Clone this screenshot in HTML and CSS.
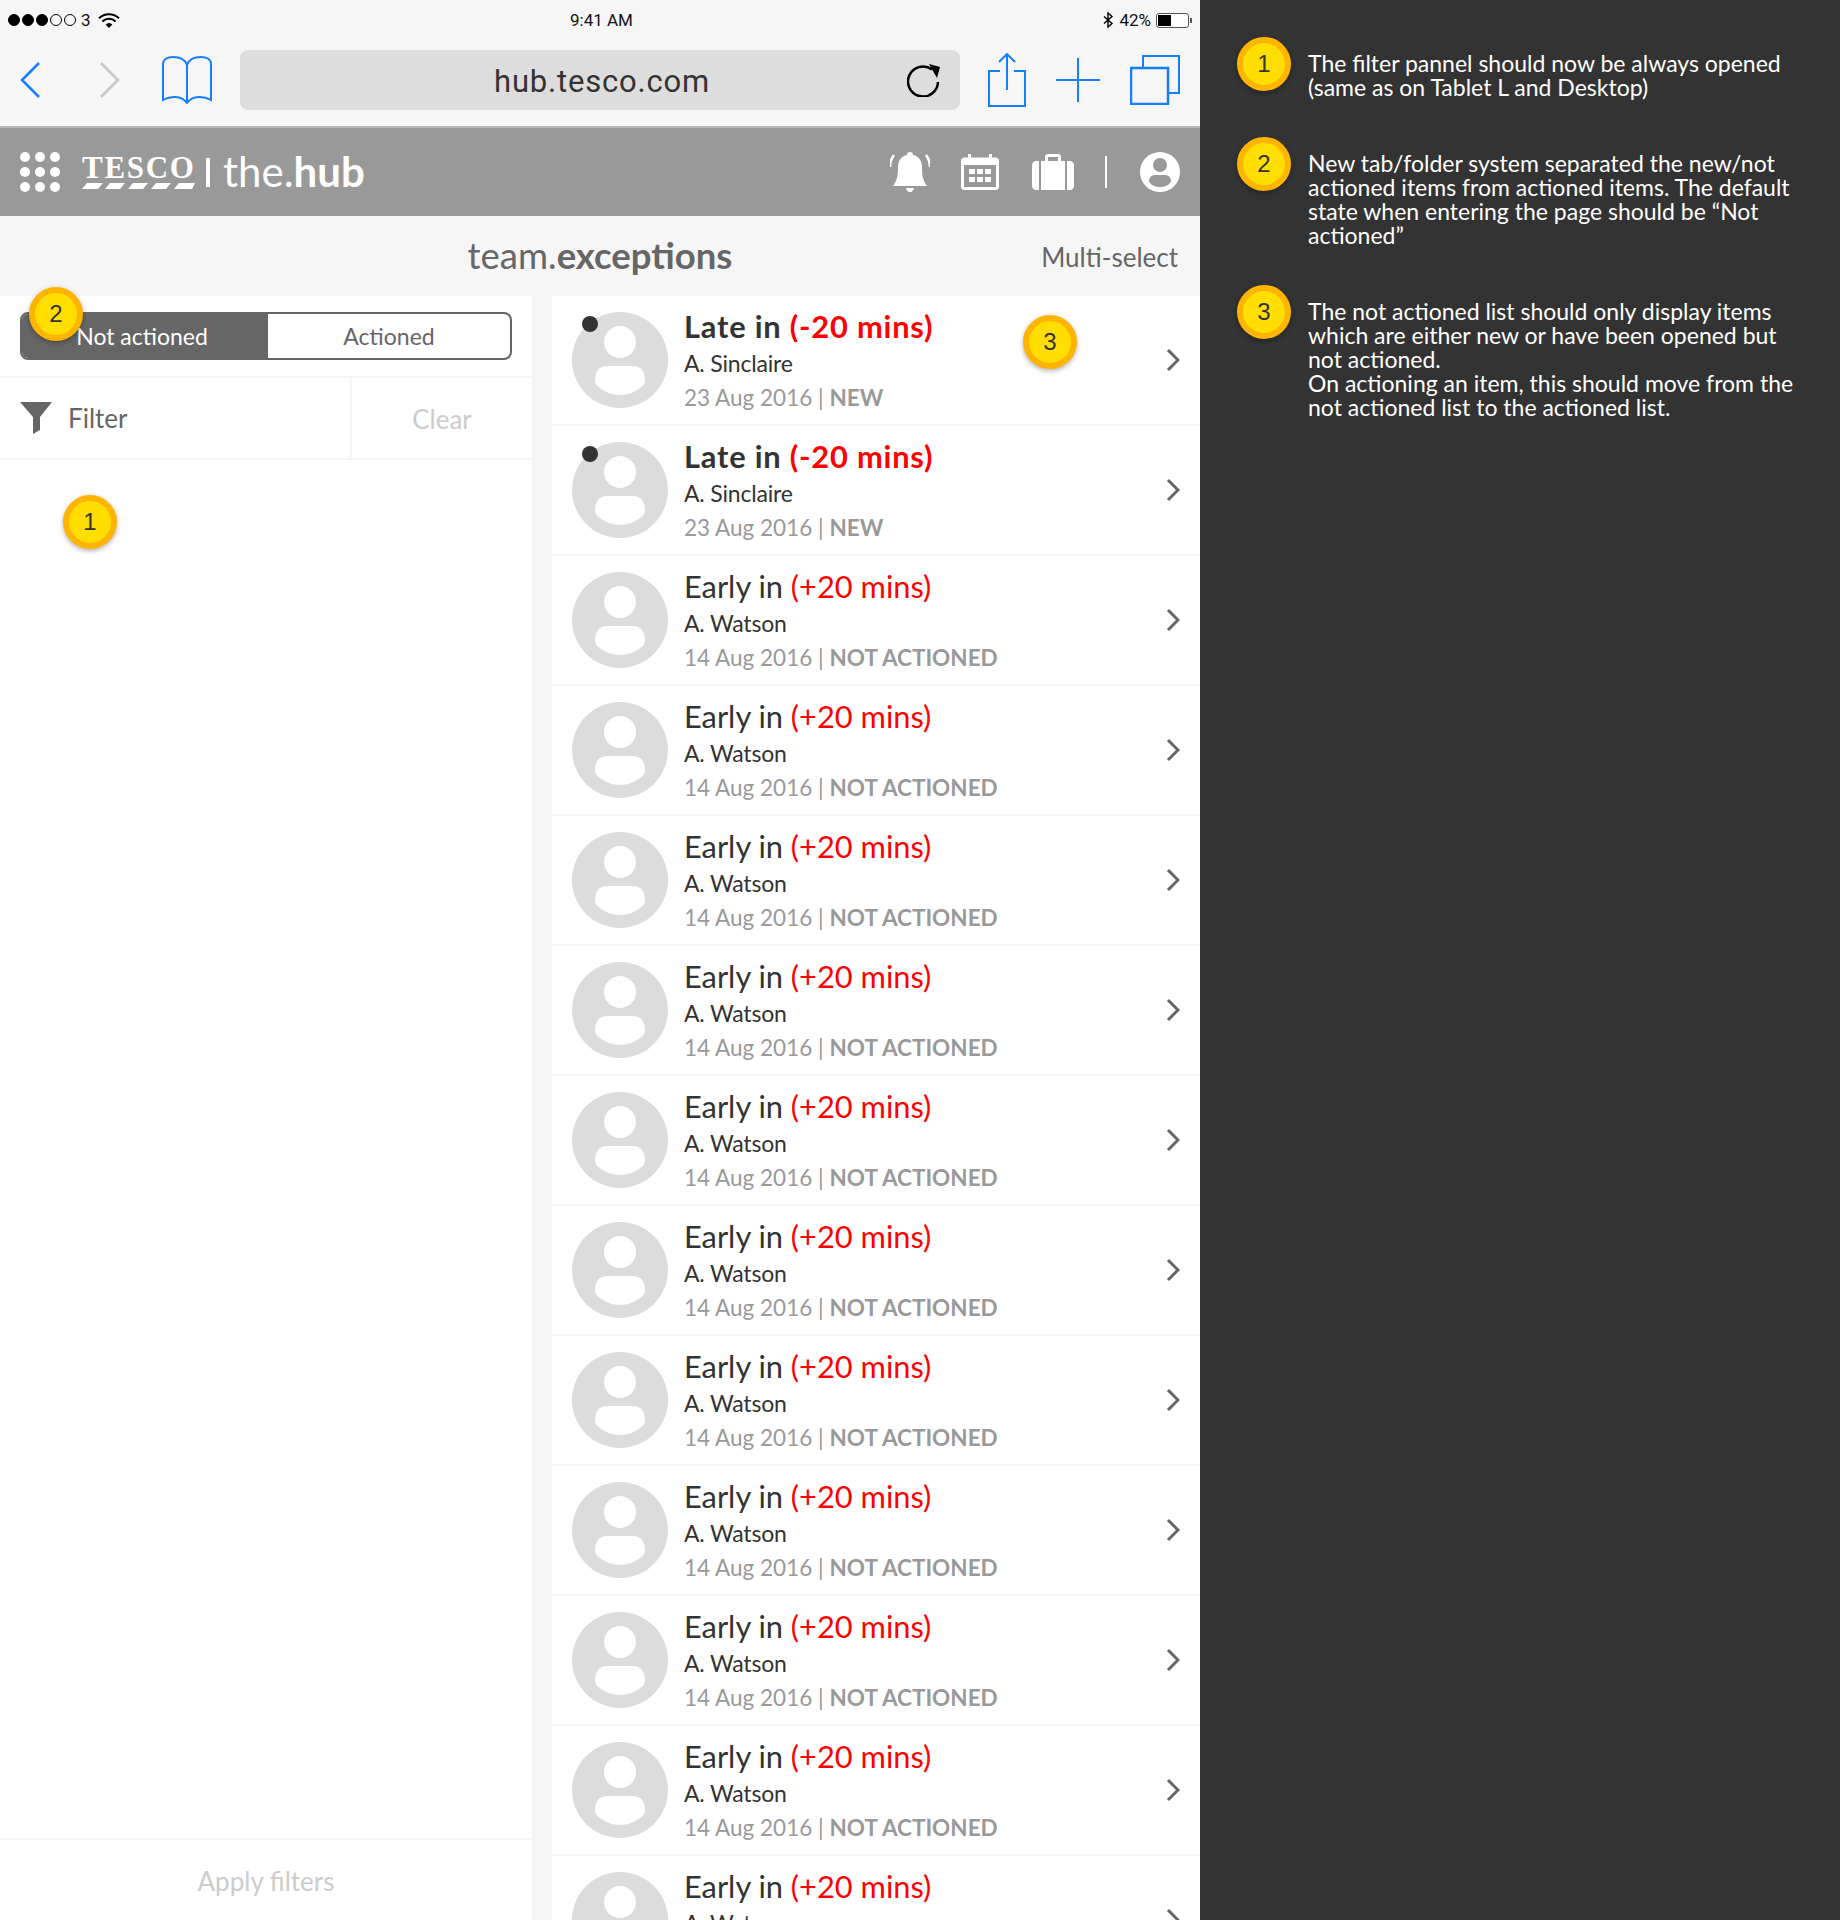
FILE: index.html
```html
<!DOCTYPE html>
<html lang="en">
<head>
    <meta charset="UTF-8">
    <title>team.exceptions - annotated</title>
    <link rel="stylesheet" href="styles.css">
</head>
<body>
<svg class="defs" width="0" height="0">
    <symbol id="avatar" viewBox="0 0 96 96">
        <circle cx="48" cy="48" r="48" fill="#dcdcdc"/>
        <circle cx="48" cy="30" r="16" fill="#fff"/>
        <path d="M35 54h26c8 0 12 6 12 14 0 4-2 6-5 8-5 4-12 7-20 7s-15-3-20-7c-3-2-5-4-5-8 0-8 4-14 12-14z" fill="#fff"/>
    </symbol>
    <symbol id="chevron" viewBox="0 0 14 24">
        <path d="M2 2l10 10L2 22" fill="none" stroke="#666" stroke-width="3"/>
    </symbol>
</svg>
<div class="page">
    <div class="tablet">
        <div class="status-bar">
            <div class="status-left">
                <span class="signal"><i class="on"></i><i class="on"></i><i class="on"></i><i></i><i></i></span>
                <span>3</span>
                <svg class="wifi" width="22" height="15" viewBox="0 0 22 15">
                    <path d="M1 5.2a14.5 14.5 0 0 1 20 0" fill="none" stroke="#000" stroke-width="2"/>
                    <path d="M4.4 8.5a9.6 9.6 0 0 1 13.2 0" fill="none" stroke="#000" stroke-width="2"/>
                    <path d="M7.6 11.6a5 5 0 0 1 6.8 0L11 15z" fill="#000"/>
                </svg>
            </div>
            <div class="status-time">9:41 AM</div>
            <div class="status-right">
                <svg width="11" height="16" viewBox="0 0 11 16"><path d="M1 4.5l8 7-4 3.5V1l4 3.5-8 7" fill="none" stroke="#000" stroke-width="1.4"/></svg>
                <span>42%</span>
                <span class="battery"><span class="battery-level"></span></span>
            </div>
        </div>

        <div class="toolbar">
            <svg class="tool-back" width="20" height="36" viewBox="0 0 20 36"><path d="M19 1L2 18l17 17" fill="none" stroke="#147efb" stroke-width="2.5"/></svg>
            <svg class="tool-forward" width="20" height="36" viewBox="0 0 20 36"><path d="M1 1l17 17L1 35" fill="none" stroke="#c8c8c8" stroke-width="2.5"/></svg>
            <svg class="tool-book" width="50" height="48" viewBox="0 0 50 48"><path d="M25 9C23 3 17 1 11 1 6 1 1 3 1 8v36c7-4 18-5 24 3 6-8 17-7 24-3V8c0-5-5-7-10-7-6 0-12 2-14 8zm0 0v38" fill="none" stroke="#147efb" stroke-width="2"/></svg>
            <div class="url-bar">
                <span class="url-text">hub.tesco.com</span>
                <svg class="reload" width="34" height="34" viewBox="0 0 34 34"><path d="M25 6.500A15 15 0 1 0 31 19" fill="none" stroke="#000" stroke-width="2.500"/><path d="M22 1l11 3-3 11z" fill="#000"/></svg>
            </div>
            <svg class="tool-share" width="38" height="54" viewBox="0 0 38 54"><path d="M12 18H1v35h36V18H26M19 37V2M11 9l8-8 8 8" fill="none" stroke="#147efb" stroke-width="2"/></svg>
            <svg class="tool-plus" width="44" height="44" viewBox="0 0 44 44"><path d="M22 0v44M0 22h44" fill="none" stroke="#147efb" stroke-width="2"/></svg>
            <svg class="tool-tabs" width="50" height="50" viewBox="0 0 50 50"><path d="M13 12V1h36v37H38" fill="none" stroke="#147efb" stroke-width="2"/><rect x="1" y="13" width="37" height="36" fill="none" stroke="#147efb" stroke-width="2.500"/></svg>
        </div>

        <div class="app-header">
            <svg class="menu-dots" width="40" height="40" viewBox="0 0 40 40" fill="#fff">
                <circle cx="5" cy="5" r="5"/><circle cx="20" cy="5" r="5"/><circle cx="35" cy="5" r="5"/>
                <circle cx="5" cy="20" r="5"/><circle cx="20" cy="20" r="5"/><circle cx="35" cy="20" r="5"/>
                <circle cx="5" cy="35" r="5"/><circle cx="20" cy="35" r="5"/><circle cx="35" cy="35" r="5"/>
            </svg>
            <div class="logo">
                <span class="logo-word">TESCO</span>
                <svg width="113" height="6" viewBox="0 0 113 6" fill="#fff"><path d="M5 0h16l-5 6H0zM28 0h15l-5 6H23zM51 0h15l-5 6H46zM74 0h15l-5 6H69zM97 0h16l-3 6H92z"/></svg>
            </div>
            <span class="logo-bar"></span>
            <span class="hub-name">the.<b>hub</b></span>
            <div class="header-icons">
                <svg width="40" height="40" viewBox="0 0 40 40" fill="#fff">
                    <path d="M20 0c2 0 3 1 3 3 6 1 9 6 9 12 0 8 1 14 5 19H3c4-5 5-11 5-19 0-6 3-11 9-12 0-2 1-3 3-3z"/>
                    <path d="M16 36h8c0 2-2 4-4 4s-4-2-4-4z"/>
                    <path d="M4 3C1 7 0 11 0 15M36 3c3 4 4 8 4 12" fill="none" stroke="#fff" stroke-width="2.500"/>
                </svg>
                <svg class="icon-cal" width="38" height="36" viewBox="0 0 38 36">
                    <rect x="1.500" y="5" width="35" height="29.500" rx="2" fill="none" stroke="#fff" stroke-width="3"/>
                    <path d="M1 5h36v6H1zM7 0h3v8H7zM28 0h3v8h-3z" fill="#fff"/>
                    <path d="M8 15h6v5H8zM16 15h6v5h-6zM24 15h6v5h-6zM8 23h6v5H8zM16 23h6v5h-6zM24 23h6v5h-6z" fill="#fff"/>
                </svg>
                <svg class="icon-case" width="42" height="36" viewBox="0 0 42 36" fill="#fff">
                    <path d="M13 7V3c0-2 1-3 3-3h10c2 0 3 1 3 3v4h-3V3H16v4z"/>
                    <path d="M9 7h24v29H9zM0 11c0-2 2-4 4-4h3v29H4c-2 0-4-2-4-4zM35 7h3c2 0 4 2 4 4v21c0 2-2 4-4 4h-3z"/>
                </svg>
                <span class="header-rule"></span>
                <svg class="icon-user" width="40" height="40" viewBox="0 0 40 40">
                    <circle cx="20" cy="20" r="20" fill="#fff"/>
                    <circle cx="20" cy="13" r="7" fill="#999"/>
                    <path d="M15 23h10c4 0 6 3 6 6 0 1-1 2-2 3-2 2-5 3-9 3s-7-1-9-3c-1-1-2-2-2-3 0-3 2-6 6-6z" fill="#999"/>
                </svg>
            </div>
        </div>

        <div class="title-bar">
            <h1 class="page-title">team.<b>exceptions</b></h1>
            <span class="multi-select">Multi-select</span>
        </div>

        <div class="content">
            <div class="filter-panel">
                <div class="tabs-row">
                    <div class="tabs">
                        <span class="tab tab-active">Not actioned</span>
                        <span class="tab">Actioned</span>
                    </div>
                    <span class="badge badge-tabs">2</span>
                </div>
                <div class="filter-row">
                    <div class="filter-label">
                        <svg width="32" height="32" viewBox="0 0 32 32"><path d="M0 0h32L20 15v13l-7 4V15z" fill="#666"/></svg>
                        <span>Filter</span>
                    </div>
                    <div class="filter-clear">Clear</div>
                </div>
                <div class="filter-body">
                    <span class="badge badge-filter">1</span>
                </div>
                <div class="apply-row">Apply filters</div>
            </div>

            <div class="exception-list">
                <div class="row row-new">
                    <span class="avatar"><svg width="96" height="96"><use href="#avatar"/></svg><span class="unread"></span></span>
                    <div class="row-text">
                        <div class="row-title"><b>Late in <span class="mins">(-20 mins)</span></b></div>
                        <div class="row-name">A. Sinclaire</div>
                        <div class="row-meta">23 Aug 2016 | <b>NEW</b></div>
                    </div>
                    <svg class="row-arrow" width="14" height="24"><use href="#chevron"/></svg>
                    <span class="badge badge-list">3</span>
                </div>
                <div class="row row-new">
                    <span class="avatar"><svg width="96" height="96"><use href="#avatar"/></svg><span class="unread"></span></span>
                    <div class="row-text">
                        <div class="row-title"><b>Late in <span class="mins">(-20 mins)</span></b></div>
                        <div class="row-name">A. Sinclaire</div>
                        <div class="row-meta">23 Aug 2016 | <b>NEW</b></div>
                    </div>
                    <svg class="row-arrow" width="14" height="24"><use href="#chevron"/></svg>
                </div>
                <div class="row">
                    <span class="avatar"><svg width="96" height="96"><use href="#avatar"/></svg></span>
                    <div class="row-text">
                        <div class="row-title">Early in <span class="mins">(+20 mins)</span></div>
                        <div class="row-name">A. Watson</div>
                        <div class="row-meta">14 Aug 2016 | <b>NOT ACTIONED</b></div>
                    </div>
                    <svg class="row-arrow" width="14" height="24"><use href="#chevron"/></svg>
                </div>
                <div class="row">
                    <span class="avatar"><svg width="96" height="96"><use href="#avatar"/></svg></span>
                    <div class="row-text">
                        <div class="row-title">Early in <span class="mins">(+20 mins)</span></div>
                        <div class="row-name">A. Watson</div>
                        <div class="row-meta">14 Aug 2016 | <b>NOT ACTIONED</b></div>
                    </div>
                    <svg class="row-arrow" width="14" height="24"><use href="#chevron"/></svg>
                </div>
                <div class="row">
                    <span class="avatar"><svg width="96" height="96"><use href="#avatar"/></svg></span>
                    <div class="row-text">
                        <div class="row-title">Early in <span class="mins">(+20 mins)</span></div>
                        <div class="row-name">A. Watson</div>
                        <div class="row-meta">14 Aug 2016 | <b>NOT ACTIONED</b></div>
                    </div>
                    <svg class="row-arrow" width="14" height="24"><use href="#chevron"/></svg>
                </div>
                <div class="row">
                    <span class="avatar"><svg width="96" height="96"><use href="#avatar"/></svg></span>
                    <div class="row-text">
                        <div class="row-title">Early in <span class="mins">(+20 mins)</span></div>
                        <div class="row-name">A. Watson</div>
                        <div class="row-meta">14 Aug 2016 | <b>NOT ACTIONED</b></div>
                    </div>
                    <svg class="row-arrow" width="14" height="24"><use href="#chevron"/></svg>
                </div>
                <div class="row">
                    <span class="avatar"><svg width="96" height="96"><use href="#avatar"/></svg></span>
                    <div class="row-text">
                        <div class="row-title">Early in <span class="mins">(+20 mins)</span></div>
                        <div class="row-name">A. Watson</div>
                        <div class="row-meta">14 Aug 2016 | <b>NOT ACTIONED</b></div>
                    </div>
                    <svg class="row-arrow" width="14" height="24"><use href="#chevron"/></svg>
                </div>
                <div class="row">
                    <span class="avatar"><svg width="96" height="96"><use href="#avatar"/></svg></span>
                    <div class="row-text">
                        <div class="row-title">Early in <span class="mins">(+20 mins)</span></div>
                        <div class="row-name">A. Watson</div>
                        <div class="row-meta">14 Aug 2016 | <b>NOT ACTIONED</b></div>
                    </div>
                    <svg class="row-arrow" width="14" height="24"><use href="#chevron"/></svg>
                </div>
                <div class="row">
                    <span class="avatar"><svg width="96" height="96"><use href="#avatar"/></svg></span>
                    <div class="row-text">
                        <div class="row-title">Early in <span class="mins">(+20 mins)</span></div>
                        <div class="row-name">A. Watson</div>
                        <div class="row-meta">14 Aug 2016 | <b>NOT ACTIONED</b></div>
                    </div>
                    <svg class="row-arrow" width="14" height="24"><use href="#chevron"/></svg>
                </div>
                <div class="row">
                    <span class="avatar"><svg width="96" height="96"><use href="#avatar"/></svg></span>
                    <div class="row-text">
                        <div class="row-title">Early in <span class="mins">(+20 mins)</span></div>
                        <div class="row-name">A. Watson</div>
                        <div class="row-meta">14 Aug 2016 | <b>NOT ACTIONED</b></div>
                    </div>
                    <svg class="row-arrow" width="14" height="24"><use href="#chevron"/></svg>
                </div>
                <div class="row">
                    <span class="avatar"><svg width="96" height="96"><use href="#avatar"/></svg></span>
                    <div class="row-text">
                        <div class="row-title">Early in <span class="mins">(+20 mins)</span></div>
                        <div class="row-name">A. Watson</div>
                        <div class="row-meta">14 Aug 2016 | <b>NOT ACTIONED</b></div>
                    </div>
                    <svg class="row-arrow" width="14" height="24"><use href="#chevron"/></svg>
                </div>
                <div class="row">
                    <span class="avatar"><svg width="96" height="96"><use href="#avatar"/></svg></span>
                    <div class="row-text">
                        <div class="row-title">Early in <span class="mins">(+20 mins)</span></div>
                        <div class="row-name">A. Watson</div>
                        <div class="row-meta">14 Aug 2016 | <b>NOT ACTIONED</b></div>
                    </div>
                    <svg class="row-arrow" width="14" height="24"><use href="#chevron"/></svg>
                </div>
                <div class="row">
                    <span class="avatar"><svg width="96" height="96"><use href="#avatar"/></svg></span>
                    <div class="row-text">
                        <div class="row-title">Early in <span class="mins">(+20 mins)</span></div>
                        <div class="row-name">A. Watson</div>
                        <div class="row-meta">14 Aug 2016 | <b>NOT ACTIONED</b></div>
                    </div>
                    <svg class="row-arrow" width="14" height="24"><use href="#chevron"/></svg>
                </div>
            </div>
        </div>
    </div>

    <div class="notes">
        <div class="note">
            <span class="badge">1</span>
            <p>The filter pannel should now be always opened<br>(same as on Tablet L and Desktop)</p>
        </div>
        <div class="note">
            <span class="badge">2</span>
            <p>New tab/folder system separated the new/not<br>actioned items from actioned items. The default<br>state when entering the page should be “Not<br>actioned”</p>
        </div>
        <div class="note">
            <span class="badge">3</span>
            <p>The not actioned list should only display items<br>which are either new or have been opened but<br>not actioned.<br>On actioning an item, this should move from the<br>not actioned list to the actioned list.</p>
        </div>
    </div>
</div>
</body>
</html>
```
FILE: styles.css
```css
* {
    box-sizing: border-box;
}
html, body {
    margin: 0;
    padding: 0;
}
body {
    font-family: Lato, "Open Sans", sans-serif;
    color: #333;
    background: #333;
}
.defs {
    position: absolute;
}
.page {
    display: flex;
    width: 1840px;
    height: 1920px;
    overflow: hidden;
}
.tablet {
    display: flex;
    flex-direction: column;
    width: 1200px;
    height: 1920px;
    background: #f6f6f6;
}

/* status bar */
.status-bar {
    display: grid;
    grid-template-columns: 1fr auto 1fr;
    align-items: center;
    height: 40px;
    padding: 0 9px 0 8px;
    font-family: Roboto, sans-serif;
    font-size: 17px;
    color: #111;
}
.status-left, .status-right {
    display: flex;
    align-items: center;
    gap: 5px;
}
.status-right {
    justify-content: flex-end;
}
.status-time {
    margin-left: 4px;
}
.signal {
    display: flex;
    gap: 2px;
}
.signal i {
    width: 12px;
    height: 12px;
    border: 1px solid #000;
    border-radius: 50%;
}
.signal i.on {
    background: #000;
}
.wifi {
    margin-left: 2px;
}
.battery {
    position: relative;
    display: block;
    width: 33px;
    height: 15px;
    margin-right: 2px;
    padding: 1px;
    border: 1px solid #555;
    border-radius: 3px;
    background: #fff;
}
.battery::after {
    content: "";
    position: absolute;
    right: -4px;
    top: 4px;
    width: 2px;
    height: 5px;
    background: #555;
}
.battery-level {
    display: block;
    width: 13px;
    height: 11px;
    background: #000;
}

/* browser toolbar */
.toolbar {
    display: flex;
    align-items: center;
    height: 88px;
    padding-bottom: 6px;
    border-bottom: 2px solid #b8b8b8;
}
.tool-back {
    margin-left: 20px;
}
.tool-forward {
    margin-left: 60px;
}
.tool-book {
    margin-left: 42px;
}
.url-bar {
    display: flex;
    align-items: center;
    justify-content: center;
    position: relative;
    width: 720px;
    height: 60px;
    margin-left: 28px;
    padding: 2px 0 0 4px;
    background: #ddd;
    border-radius: 8px;
}
.url-text {
    font-family: Roboto, sans-serif;
    font-size: 31px;
    letter-spacing: 0.8px;
    color: #333;
}
.reload {
    position: absolute;
    right: 19px;
    top: 13px;
}
.tool-share {
    margin-left: 28px;
}
.tool-plus {
    margin-left: 30px;
}
.tool-tabs {
    margin-left: 30px;
}

/* app header */
.app-header {
    display: flex;
    align-items: center;
    height: 88px;
    padding: 0 20px;
    background: #999;
    color: #fff;
}
.logo {
    display: flex;
    flex-direction: column;
    width: 113px;
    margin-left: 22px;
}
.logo-word {
    height: 28px;
    font-family: "Liberation Serif", serif;
    font-weight: bold;
    font-size: 31px;
    line-height: 26px;
    letter-spacing: 1.7px;
    white-space: nowrap;
}
.logo-bar {
    width: 4px;
    height: 29px;
    margin-left: 11px;
    background: #fff;
}
.hub-name {
    margin-left: 13px;
    padding-bottom: 2px;
    font-size: 42px;
    line-height: 44px;
}
.header-icons {
    display: flex;
    align-items: center;
    margin-left: auto;
}
.icon-cal {
    margin-left: 31px;
}
.icon-case {
    margin-left: 33px;
}
.header-rule {
    width: 2px;
    height: 32px;
    margin-left: 31px;
    background: #fff;
}
.icon-user {
    margin-left: 33px;
}

/* page title */
.title-bar {
    position: relative;
    height: 80px;
    text-align: center;
}
.page-title {
    margin: 0;
    font-size: 36.500px;
    font-weight: normal;
    line-height: 78px;
    color: #666;
}
.multi-select {
    position: absolute;
    right: 22px;
    top: 24px;
    font-size: 26px;
    line-height: 34px;
    color: #666;
}

/* two columns */
.content {
    display: flex;
    gap: 20px;
    flex: 1;
    min-height: 0;
}

/* filter panel */
.filter-panel {
    display: flex;
    flex-direction: column;
    width: 532px;
    background: #fff;
}
.tabs-row {
    position: relative;
    height: 82px;
    padding: 16px 20px 0;
    border-bottom: 2px solid #f6f6f6;
}
.tabs {
    display: flex;
    width: 492px;
    height: 48px;
    border: 2px solid #666;
    border-radius: 8px;
    overflow: hidden;
    font-size: 23px;
    line-height: 44px;
    text-align: center;
    color: #666;
}
.tab {
    flex: 1;
}
.tab-active {
    flex: none;
    width: 246px;
    padding-right: 6px;
    background: #666;
    color: #fff;
}
.filter-row {
    display: flex;
    height: 82px;
    border-bottom: 2px solid #f6f6f6;
    font-size: 26px;
}
.filter-label {
    display: flex;
    align-items: center;
    gap: 16px;
    width: 352px;
    padding-left: 20px;
    border-right: 2px solid #f6f6f6;
    color: #666;
}
.filter-clear {
    flex: 1;
    line-height: 82px;
    text-align: center;
    color: #ccc;
}
.filter-body {
    position: relative;
    flex: 1;
}
.apply-row {
    height: 82px;
    border-top: 2px solid #f6f6f6;
    font-size: 26px;
    line-height: 82px;
    text-align: center;
    color: #ccc;
}

/* exception list */
.exception-list {
    flex: 1;
}
.row {
    position: relative;
    display: flex;
    height: 130px;
    padding: 14px 20px 0 20px;
    background: #fff;
    border-bottom: 2px solid #f6f6f6;
}
.avatar {
    position: relative;
    flex: none;
    width: 96px;
    height: 96px;
    margin-top: 2px;
}
.unread {
    position: absolute;
    left: 10px;
    top: 4px;
    width: 16px;
    height: 16px;
    border-radius: 50%;
    background: #333;
}
.row-text {
    margin-left: 16px;
}
.row-title {
    font-size: 30.800px;
    line-height: 34px;
    color: #333;
}
.row-title b {
    font-weight: bold;
    letter-spacing: 0.8px;
}
.mins {
    color: #f00;
}
.row-name {
    margin-top: 2px;
    font-size: 23px;
    line-height: 34px;
    letter-spacing: -0.2px;
    color: #333;
}
.row-meta {
    font-size: 22.500px;
    line-height: 35px;
    color: #999;
}
.row-arrow {
    position: absolute;
    right: 20px;
    top: 52px;
}

/* yellow markers */
.badge {
    display: block;
    flex: none;
    width: 54px;
    height: 54px;
    border: 6px solid #ffb400;
    border-radius: 50%;
    background: #ffde00;
    box-shadow: 0 2px 5px rgba(0, 0, 0, 0.3);
    font-family: "Liberation Sans", sans-serif;
    font-size: 24px;
    line-height: 42px;
    text-align: center;
    color: #333;
}
.badge-tabs {
    position: absolute;
    left: 29px;
    top: -9px;
}
.badge-filter {
    position: absolute;
    left: 63px;
    top: 35px;
}
.badge-list {
    position: absolute;
    left: 471px;
    top: 19px;
}

/* annotations */
.notes {
    flex: 1;
    padding-left: 37px;
    background: #333;
}
.note {
    display: flex;
    gap: 17px;
    margin-top: 38px;
}
.note:first-child {
    margin-top: 37px;
}
.note p {
    margin: 0;
    padding-top: 14px;
    font-size: 23px;
    line-height: 24px;
    color: #fff;
}
```
